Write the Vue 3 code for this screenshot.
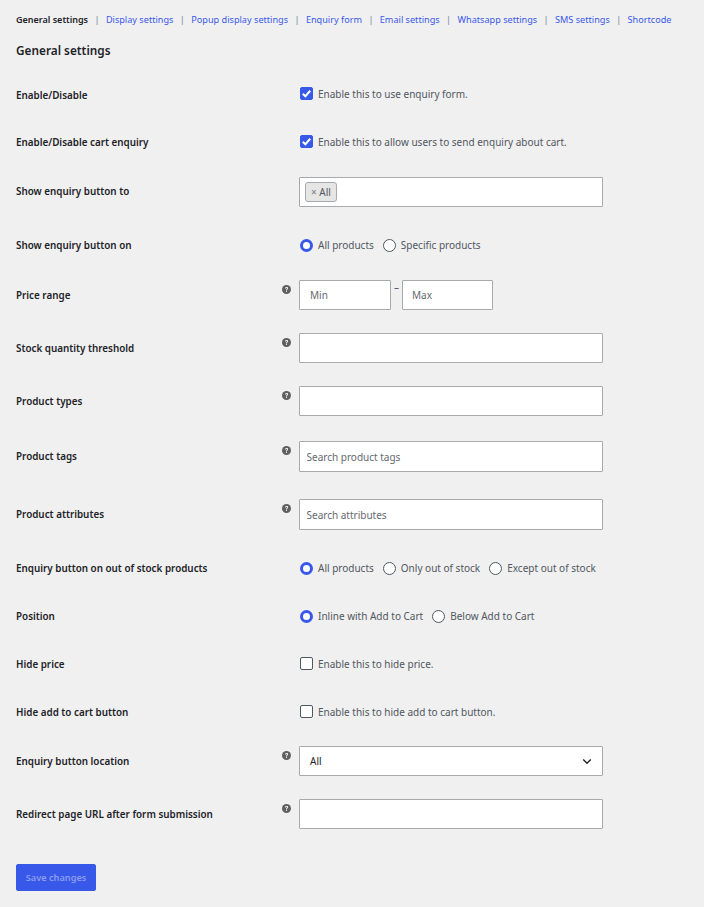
<template>
  <div class="settings-page">
    <!-- tabs -->
    <ul class="subsub">
      <li v-for="(tab, index) in tabs" :key="tab">
        <a href="#" :class="{ current: index === 0 }">{{ tab }}</a>
        <span v-if="index < tabs.length - 1" class="sep">|</span>
      </li>
    </ul>

    <h2 class="page-title">General settings</h2>

    <form class="form-table" @submit.prevent>
      <div v-for="row in rows" :key="row.label" class="row" :class="row.gap">
        <div class="row-label" :class="row.labelClass">{{ row.label }}</div>
        <div class="row-help">
          <svg v-if="row.help" class="help-icon" viewBox="0 0 20 20">
            <circle cx="10" cy="10" r="10" fill="#5f5f5f" />
            <path d="M6.6 7.6c.2-2 1.7-3.2 3.6-3.2 2 0 3.4 1.2 3.4 2.9 0 1.300-.7 2-1.700 2.700-.8.5-1.100.9-1.100 1.700v.4H8.900v-.6c0-1.200.5-1.900 1.400-2.500.8-.5 1.200-.9 1.200-1.600 0-.7-.5-1.200-1.300-1.200-.8 0-1.400.5-1.500 1.400z" fill="#fff" />
            <rect x="8.800" y="13" width="2.200" height="2.300" fill="#fff" />
          </svg>
        </div>
        <div class="row-field">
          <!-- checkbox -->
          <label v-if="row.type === 'check'" class="check-line">
            <span class="checkbox-wrap">
              <input type="checkbox" class="checkbox" :checked="row.checked" />
              <svg v-if="row.checked" class="check-mark" viewBox="0 0 14 14">
                <path d="M3 7.200l2.800 2.800L11 4" fill="none" stroke="#fff" stroke-width="2.200" />
              </svg>
            </span>
            <span>{{ row.text }}</span>
          </label>

          <!-- radios -->
          <div v-else-if="row.type === 'radio'" class="radio-line">
            <label v-for="(opt, i) in row.options" :key="opt" class="radio-item">
              <input type="radio" class="radio" :name="row.label" :checked="i === 0" />
              <span>{{ opt }}</span>
            </label>
          </div>

          <!-- tag select -->
          <div v-else-if="row.type === 'tags'" class="tags-box">
            <span class="tag"><span class="tag-x">×</span> All</span>
          </div>

          <!-- min / max -->
          <div v-else-if="row.type === 'range'" class="range">
            <input class="text-input small" type="text" placeholder="Min" />
            <span class="dash">–</span>
            <input class="text-input small" type="text" placeholder="Max" />
          </div>

          <!-- dropdown -->
          <div v-else-if="row.type === 'select'" class="select-box">
            <span>All</span>
            <svg class="chevron" viewBox="0 0 12 8">
              <path d="M1.500 1.500L6 6l4.500-4.500" fill="none" stroke="#1d2327" stroke-width="1.700" />
            </svg>
          </div>

          <input
            v-else
            class="text-input"
            :class="{ search: row.placeholder }"
            type="text"
            :placeholder="row.placeholder"
          />
        </div>
      </div>

      <button type="submit" class="save-btn">Save changes</button>
    </form>
  </div>
</template>

<script setup>
const tabs = [
  'General settings',
  'Display settings',
  'Popup display settings',
  'Enquiry form',
  'Email settings',
  'Whatsapp settings',
  'SMS settings',
  'Shortcode'
]

const rows = [
  { label: 'Enable/Disable', type: 'check', checked: true, text: 'Enable this to use enquiry form.', labelClass: 'nudge', gap: 'gap-28' },
  { label: 'Enable/Disable cart enquiry', type: 'check', checked: true, text: 'Enable this to allow users to send enquiry about cart.', gap: 'gap-25' },
  { label: 'Show enquiry button to', type: 'tags', labelClass: 'tall-tag', gap: 'gap-28' },
  { label: 'Show enquiry button on', type: 'radio', options: ['All products', 'Specific products'], gap: 'gap-25' },
  { label: 'Price range', type: 'range', help: true, labelClass: 'tall', gap: 'gap-23' },
  { label: 'Stock quantity threshold', type: 'input', help: true, labelClass: 'tall', gap: 'gap-23' },
  { label: 'Product types', type: 'input', help: true, labelClass: 'tall', gap: 'gap-25' },
  { label: 'Product tags', type: 'input', help: true, labelClass: 'tall', placeholder: 'Search product tags', gap: 'gap-27' },
  { label: 'Product attributes', type: 'input', help: true, labelClass: 'tall', placeholder: 'Search attributes', gap: 'gap-28' },
  { label: 'Enquiry button on out of stock products', type: 'radio', options: ['All products', 'Only out of stock', 'Except out of stock'], gap: 'gap-28' },
  { label: 'Position', type: 'radio', options: ['Inline with Add to Cart', 'Below Add to Cart'], gap: 'gap-28' },
  { label: 'Hide price', type: 'check', checked: false, text: 'Enable this to hide price.', gap: 'gap-28' },
  { label: 'Hide add to cart button', type: 'check', checked: false, text: 'Enable this to hide add to cart button.', gap: 'gap-24' },
  { label: 'Enquiry button location', type: 'select', help: true, labelClass: 'tall', gap: 'gap-23' },
  { label: 'Redirect page URL after form submission', type: 'input', help: true, labelClass: 'tall', gap: 'gap-35' }
]
</script>

<style>
html,
body {
  background: #f0f0f1;
}
</style>

<style scoped>
.settings-page {
  height: 907px;
  box-sizing: border-box;
  padding: 0 16px;
  background: #f0f0f1;
  color: #50575e;
  font-family: "Noto Sans", "Open Sans", sans-serif;
  font-size: 10px;
  overflow: hidden;
}

.subsub {
  display: flex;
  margin: 0;
  padding: 13px 0 0;
  list-style: none;
  font-size: 9.15px;
  line-height: 14px;
  white-space: nowrap;
}

.subsub a {
  color: #3858e9;
  text-decoration: none;
}

.subsub a.current {
  color: #1d2327;
  font-size: 9px;
  font-weight: 600;
}

.sep {
  margin: 0 6.4px;
  color: #6c8296;
}

.page-title {
  margin: 13px 0 0;
  color: #1d2327;
  font-size: 11.8px;
  font-weight: 600;
  line-height: 20px;
}

.form-table {
  display: flex;
  flex-direction: column;
  align-items: flex-start;
  margin-top: 24px;
}

.row {
  display: flex;
  align-items: flex-start;
  width: 100%;
}

.gap-23 { margin-bottom: 23px; }
.gap-24 { margin-bottom: 24px; }
.gap-25 { margin-bottom: 25px; }
.gap-27 { margin-bottom: 27px; }
.gap-28 { margin-bottom: 28px; }
.gap-35 { margin-bottom: 35px; }

.row-label {
  width: 266px;
  box-sizing: border-box;
  height: 20px;
  padding-top: 1px;
  color: #1d2327;
  font-size: 9.85px;
  font-weight: 600;
  line-height: 19px;
}

.row-label.nudge {
  padding-top: 2px;
}

.row-label.tall-tag {
  padding-top: 5px;
}

.row-label.tall {
  padding-top: 6px;
}

.row-help {
  width: 17px;
  flex: none;
}

.help-icon {
  display: block;
  width: 9px;
  height: 9px;
  margin-top: 5px;
}

.row-field {
  width: 304px;
  flex: none;
}

.check-line,
.radio-line,
.radio-item {
  display: flex;
  align-items: center;
}

.check-line {
  gap: 5.5px;
  height: 20px;
  padding-left: 0.5px;
}

.radio-line {
  height: 20px;
  padding-left: 1px;
  gap: 9px;
  white-space: nowrap;
}

.radio-item {
  gap: 5px;
}

.checkbox-wrap {
  position: relative;
  width: 13px;
  height: 13px;
  margin-top: -1px;
}

.checkbox {
  display: block;
  box-sizing: border-box;
  width: 13px;
  height: 13px;
  margin: 0;
  appearance: none;
  background: #fff;
  border: 1px solid #50575e;
  border-radius: 2px;
}

.checkbox:checked {
  background: #3858e9;
  border-color: #3858e9;
}

.check-mark {
  position: absolute;
  top: 0;
  left: 0;
  width: 13px;
  height: 13px;
}

.radio {
  box-sizing: border-box;
  width: 13px;
  height: 13px;
  margin: 0;
  appearance: none;
  background: #fff;
  border: 1px solid #50575e;
  border-radius: 50%;
}

.radio:checked {
  border: 3.5px solid #3858e9;
}

.text-input,
.tags-box,
.select-box {
  display: block;
  box-sizing: border-box;
  width: 304px;
  height: 30px;
  background: #fff;
  border: 1px solid #a7aaad;
  border-radius: 1px;
  font: inherit;
  color: #3c434a;
}

.text-input {
  padding: 0 6.5px;
  outline: none;
}

.text-input::placeholder {
  color: #646970;
  opacity: 1;
}

.text-input.search {
  height: 31px;
}

.text-input.small {
  width: 92px;
  padding: 0 10px;
}

.text-input.small + .dash + .text-input.small {
  width: 91px;
  padding: 0 9px;
}

.range {
  display: flex;
}

.dash {
  width: 11px;
  text-align: center;
  line-height: 14px;
  color: #50575e;
}

.tags-box {
  display: flex;
  align-items: center;
  padding: 0 5px;
}

.tag {
  display: inline-block;
  box-sizing: border-box;
  height: 20px;
  padding: 0 5px;
  background: #e6e6e6;
  border: 1px solid #a7aaad;
  border-radius: 3px;
  color: #50575e;
  line-height: 18px;
}

.tag-x {
  color: #787c82;
}

.select-box {
  display: flex;
  align-items: center;
  justify-content: space-between;
  padding: 0 10px;
  color: #1d2327;
}

.chevron {
  width: 10px;
  height: 7px;
}

.save-btn {
  display: block;
  box-sizing: border-box;
  width: 80px;
  height: 27px;
  padding: 0;
  background: #3858e9;
  border: 1px solid #3858e9;
  border-radius: 2px;
  color: #8b9cf2;
  font: inherit;
  font-size: 9.2px;
  font-weight: 600;
  cursor: default;
}
</style>
